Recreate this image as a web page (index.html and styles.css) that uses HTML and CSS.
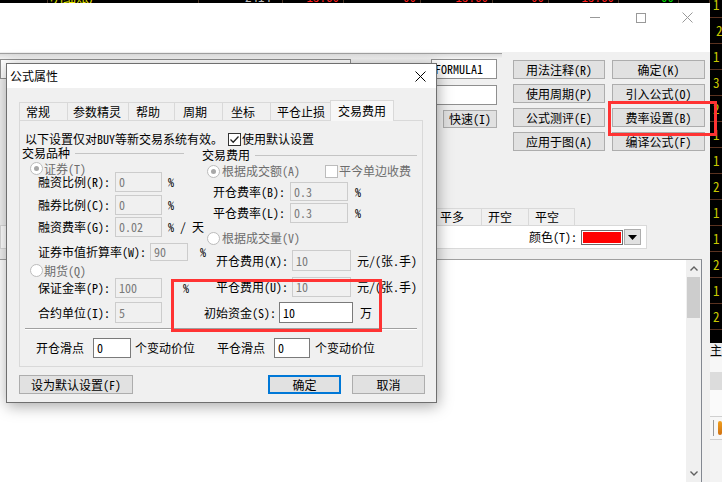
FILE: index.html
```html
<!DOCTYPE html>
<html lang="zh-CN">
<head>
<meta charset="utf-8">
<title>公式属性</title>
<link rel="stylesheet" href="styles.css">
</head>
<body>
<div class="screen">
  <div class="ticker">
    <div class="tk"></div>
    <div class="tk tl"><span class="yl">明细账户</span></div>
    <div class="tk pr11"><span class="gy">2414</span></div>
    <div class="tk"><span class="rd">15.60</span></div>
    <div class="tk"><span class="rd">00</span></div>
    <div class="tk"><span class="rd">15.60</span></div>
    <div class="tk"><span class="rd">00</span></div>
    <div class="tk"><span class="rd">15.60</span></div>
    <div class="tk"><span class="gn">00</span></div>
    <div class="tk"></div>
  </div>

  <div class="rstrip">
    <div class="rs-top">
      <div class="rc first">1</div>
      <div class="rc ind">2</div>
      <div class="rc">1</div>
      <div class="rc">3</div>
      <div class="rc">2</div>
      <div class="rc">1</div>
      <div class="rc">1</div>
      <div class="rc">2</div>
      <div class="rc">1</div>
      <div class="rc">1</div>
      <div class="rc">2</div>
      <div class="rc">1</div>
      <div class="rc">2</div>
    </div>
    <div class="rs-bot">
      <div class="rsb-name">主力资金</div>
      <div class="rsb-gap"></div>
      <div class="rsb-band"></div>
      <div class="rsb-w"></div>
      <div class="rsb-row"><span class="rsb-vl"></span><span class="rsb-ic"></span></div>
      <div class="rsb-rest"></div>
    </div>
  </div>

  <div class="win">
    <div class="wtitle">
      <div class="cap"><span class="cap-min"></span></div>
      <div class="cap"><span class="cap-max"></span></div>
      <div class="cap"><svg width="11" height="11" viewBox="0 0 11 11"><path d="M0.5 0.5L10.5 10.5M10.5 0.5L0.5 10.5" stroke="#999" stroke-width="1" fill="none"/></svg></div>
    </div>
    <div class="wbody">
      <div class="upper">
        <div class="lform">
          <div class="bar"></div>
          <div class="r1"><div class="tb name"></div><div class="tb formula">FORMULA1</div></div>
          <div class="r2"><div class="tb f2"></div></div>
          <div class="r3"><div class="btn quick">快速(I)</div></div>
        </div>
        <div class="btns">
          <div class="btn">用法注释(R)</div><div class="btn">确定(K)</div>
          <div class="btn">使用周期(P)</div><div class="btn">引入公式(O)</div>
          <div class="btn">公式测评(E)</div><div class="btn">费率设置(B)</div>
          <div class="btn">应用于图(A)</div><div class="btn">编译公式(F)</div>
        </div>
      </div>
      <div class="tabs2">
        <div class="t2 w48">开多</div>
        <div class="t2 w49">平多</div>
        <div class="t2 w48">开空</div>
        <div class="t2 w47">平空</div>
      </div>
      <div class="cpanel">
        <span class="clabel">颜色(T):</span>
        <span class="cbox"><span class="cfill"></span></span>
        <span class="cdrop"><svg width="9" height="5" viewBox="0 0 9 5"><path d="M0 0H9L4.5 5Z" fill="#000"/></svg></span>
      </div>
      <div class="editor">
        <div class="edit">
          <div class="vscroll">
            <div class="vs-btn"><svg width="8" height="5" viewBox="0 0 8 5"><path d="M0.5 4.5L4 1L7.5 4.5" stroke="#606060" stroke-width="1.4" fill="none"/></svg></div>
            <div class="vs-thumb"></div>
            <div class="vs-fill"></div>
            <div class="vs-btn"><svg width="8" height="5" viewBox="0 0 8 5"><path d="M0.5 0.5L4 4L7.5 0.5" stroke="#606060" stroke-width="1.4" fill="none"/></svg></div>
          </div>
        </div>
      </div>
    </div>
  </div>

  <div class="dlg">
    <div class="dtitle">
      <span>公式属性</span>
      <svg width="11" height="11" viewBox="0 0 11 11"><path d="M0.5 0.5L10.5 10.5M10.5 0.5L0.5 10.5" stroke="#000" stroke-width="1" fill="none"/></svg>
    </div>
    <div class="dbody">
      <div class="tabs">
        <div class="tab">常规</div>
        <div class="tab">参数精灵</div>
        <div class="tab">帮助</div>
        <div class="tab">周期</div>
        <div class="tab">坐标</div>
        <div class="tab">平仓止损</div>
        <div class="tab sel">交易费用</div>
      </div>
      <div class="panel">
        <div class="notice">
          <span class="ntext">以下设置仅对BUY等新交易系统有效。</span>
          <span class="chk"><svg width="11" height="11" viewBox="0 0 11 11"><path d="M1.5 5.5L4.2 8.2L9.5 2.5" stroke="#222" stroke-width="1.3" fill="none"/></svg></span>
          <span class="ctext">使用默认设置</span>
        </div>
        <div class="cols">
          <div class="lcol">
            <div class="ghdr gl"><span>交易品种</span><span class="gline"></span></div>
            <div class="row l-rad1"><span class="radio on"></span><span class="dis rtext">证券(T)</span></div>
            <div class="row l-a"><span class="lbl lw77">融资比例(R):</span><span class="inp iw47">0</span><span class="u ml6">%</span></div>
            <div class="row l-b"><span class="lbl lw77">融券比例(C):</span><span class="inp iw47">0</span><span class="u ml6">%</span></div>
            <div class="row l-c"><span class="lbl lw77">融资费率(G):</span><span class="inp iw47">0.02</span><span class="u ml6">% / 天</span></div>
            <div class="row l-d"><span class="lbl lw112">证券市值折算率(W):</span><span class="inp iw38">90</span><span class="u ml12">%</span></div>
            <div class="row l-rad2"><span class="radio"></span><span class="dis rtext">期货(Q)</span></div>
            <div class="row l-e"><span class="lbl lw77">保证金率(P):</span><span class="inp iw47">100</span><span class="u ml21">%</span></div>
            <div class="row l-f"><span class="lbl lw77">合约单位(I):</span><span class="inp iw47">5</span></div>
          </div>
          <div class="rcol">
            <div class="ghdr gr"><span>交易费用</span><span class="gline"></span></div>
            <div class="row r-rad1"><span class="rgrp"><span class="radio on"></span><span class="dis rtext2">根据成交额(A)</span></span><span class="chk dchk"></span><span class="dis ctext">平今单边收费</span></div>
            <div class="row r-a"><span class="lbl lw77">开仓费率(B):</span><span class="inp iw58">0.3</span><span class="u ml7">%</span></div>
            <div class="row r-b"><span class="lbl lw77">平仓费率(L):</span><span class="inp iw58">0.3</span><span class="u ml7">%</span></div>
            <div class="row r-rad2"><span class="radio"></span><span class="dis rtext2">根据成交量(V)</span></div>
            <div class="row r-c"><span class="lbl lw76">开仓费用(X):</span><span class="inp iw59">10</span><span class="u ml6">元/(张.手)</span></div>
            <div class="row r-d"><span class="lbl lw76">平仓费用(U):</span><span class="inp iw59">10</span><span class="u ml6">元/(张.手)</span></div>
            <div class="row r-e"><span class="lbl lw75">初始资金(S):</span><span class="inp white iw74">10</span><span class="u ml7">万</span></div>
          </div>
        </div>
        <div class="sep"></div>
        <div class="row slide">
          <span class="lbl lw57">开仓滑点</span><span class="inp white iw38">0</span><span class="u ml4">个变动价位</span>
          <span class="lbl lw57 ml22">平仓滑点</span><span class="inp white iw36">0</span><span class="u ml5">个变动价位</span>
        </div>
      </div>
      <div class="dbtns">
        <div class="btn b-def">设为默认设置(F)</div>
        <div class="btn b-ok">确定</div>
        <div class="btn b-cancel">取消</div>
      </div>
    </div>
    <div class="mark mark-d"></div>
  </div>

  <div class="mark mark-b"></div>
</div>
</body>
</html>
```

FILE: styles.css
```css
* { box-sizing: border-box; margin: 0; padding: 0; }
html, body { width: 722px; height: 482px; overflow: hidden; background: #000; }
body {
  font-family: "Noto Sans Mono CJK SC", "Noto Sans CJK SC", "Noto Sans", sans-serif;
  font-size: 12px;
  line-height: 14px;
  color: #000;
}
.screen {
  position: relative;
  width: 722px;
  height: 482px;
  display: grid;
  grid-template-columns: 710px 12px;
  grid-template-rows: 3px 479px;
}

/* top ticker fragment */
.ticker {
  grid-column: 1; grid-row: 1;
  display: grid;
  grid-template-columns: 48px 151px 84px 61px 77px 72px 56px 70px 60px 31px;
  overflow: hidden;
  background: #000;
}
.tk { height: 3px; overflow: hidden; border-right: 1px solid #4a3526; text-align: right; padding-right: 4px; white-space: nowrap; }
.tk.tl { text-align: left; padding-left: 2px; }
.tk.pr11 { padding-right: 11px; }
.tk span { display: block; font-size: 13px; line-height: 13px; margin-top: -10px; }
.yl { color: #e8e800; }
.gy { color: #bdbdbd; }
.rd { color: #ff2020; }
.gn { color: #00e000; }

/* right strip */
.rstrip { grid-column: 2; grid-row: 1 / 3; display: flex; flex-direction: column; overflow: hidden; background: #000; }
.rs-top { height: 343px; flex: none; display: flex; flex-direction: column; }
.rc { height: 26px; flex: none; border-bottom: 1px solid #5a3220; color: #c8c800; font-size: 13px; line-height: 25px; padding-left: 3px; white-space: nowrap; }
.rc.first { height: 18px; line-height: 10px; }
.rc.ind { padding-left: 6px; }
.rs-bot { flex: 1; background: #f3f3f3; display: flex; flex-direction: column; }
.rsb-name { height: 14px; line-height: 14px; white-space: nowrap; overflow: hidden; background: #ececec; border-bottom: 1px solid #c8c8c8; }
.rsb-gap { height: 15px; background: #f7f7f7; }
.rsb-band { height: 18px; background: #dcdcdc; }
.rsb-w { height: 27px; background: #fafafa; border-bottom: 1px solid #d0d0d0; }
.rsb-row { height: 23px; border-bottom: 1px solid #d0d0d0; display: flex; align-items: center; padding-left: 3px; background: #f7f7f7; }
.rsb-vl { width: 1px; height: 16px; background: #999; }
.rsb-ic { width: 6px; height: 14px; margin-left: 4px; background: linear-gradient(#f0a020, #d07010); border-radius: 2px; }
.rsb-rest { flex: 1; background: #f3f3f3; }

/* background window */
.win { grid-column: 1; grid-row: 2; display: flex; flex-direction: column; background: #f0f0f0; }
.wtitle { height: 49px; flex: none; background: #fff; display: flex; justify-content: flex-end; align-items: flex-start; }
.cap { width: 46px; height: 29px; display: flex; align-items: center; justify-content: center; }
.cap-min { width: 10px; height: 1px; background: #999; }
.cap-max { width: 10px; height: 10px; border: 1px solid #999; }
.wbody { flex: 1; display: flex; flex-direction: column; }
.upper { height: 156px; flex: none; display: flex; }
.lform { width: 513px; flex: none; display: flex; flex-direction: column; }
.bar { margin-top: 1px; width: 502px; height: 6px; border-top: 1px solid #a0a0a0; background: linear-gradient(#dcdcdc, #f4f4f4); }
.r1 { height: 20px; display: flex; }
.tb { height: 20px; background: #fff; border: 1px solid #8f8f8f; padding-left: 3px; line-height: 18px; white-space: nowrap; }
.tb.name { width: 351px; }
.tb.formula { margin-left: 80px; width: 66px; }
.r2 { margin-top: 6px; height: 20px; display: flex; padding-left: 431px; }
.tb.f2 { width: 66px; }
.r3 { margin-top: 5px; display: flex; padding-left: 443px; }
.btn { height: 19px; background: #e1e1e1; border: 1px solid #adadad; display: flex; align-items: center; justify-content: center; white-space: nowrap; }
.btn.quick { width: 54px; height: 18px; }
.btns { padding-top: 8px; display: grid; grid-template-columns: 92px 93px; column-gap: 7px; row-gap: 5px; grid-auto-rows: 19px; align-content: start; }

.tabs2 { height: 17px; flex: none; display: flex; padding-left: 386px; }
.t2 { height: 17px; border: 1px solid #d9d9d9; border-bottom: none; margin-right: -1px; display: flex; align-items: center; padding-left: 6px; background: #f0f0f0; }
.w47 { width: 47px; } .w48 { width: 48px; } .w49 { width: 49px; }

.cpanel { width: 647px; height: 24px; flex: none; background: #fff; border: 1px solid #d9d9d9; display: flex; align-items: center; justify-content: flex-end; padding-right: 5px; }
.clabel { margin-right: 4px; }
.cbox { width: 42px; height: 15px; border: 1px solid #6d6d6d; padding: 1px; background: #fff; display: flex; }
.cfill { flex: 1; background: #ff0000; }
.cdrop { width: 17px; height: 16px; margin-left: 1px; background: #e1e1e1; border: 1px solid #adadad; display: flex; align-items: center; justify-content: center; }

.editor { margin-top: 10px; flex: 1; display: flex; }
.edit { width: 702px; background: #fff; border-top: 1px solid #a0a0a0; border-right: 1px solid #828790; display: flex; justify-content: flex-end; }
.vscroll { width: 15px; background: #f0f0f0; display: flex; flex-direction: column; }
.vs-btn { height: 17px; display: flex; align-items: center; justify-content: center; }
.vs-thumb { height: 41px; margin: 0 1px; background: #cdcdcd; }
.vs-fill { flex: 1; }

/* dialog */
.dlg {
  position: absolute; left: 6px; top: 63px; width: 431px; height: 340px;
  border: 1px solid #6f6f6f; background: #f0f0f0;
  box-shadow: 1px 3px 14px rgba(0,0,0,0.35);
  display: flex; flex-direction: column;
}
.dtitle { height: 24px; flex: none; background: #fff; display: flex; align-items: center; justify-content: space-between; padding: 0 10px 0 3px; }
.dbody { flex: 1; padding: 12px 0 0 12px; }
.tabs { display: flex; align-items: flex-end; height: 20px; }
.tab { height: 18px; border: 1px solid #d9d9d9; border-bottom: none; margin-right: -1px; display: flex; align-items: center; padding-left: 6px; background: #f0f0f0; white-space: nowrap; }
.tab:nth-child(1) { width: 49px; }
.tab:nth-child(2) { width: 62px; padding-left: 5px; }
.tab:nth-child(3) { width: 47px; padding-left: 7px; }
.tab:nth-child(4) { width: 49px; padding-left: 8px; }
.tab:nth-child(5) { width: 49px; padding-left: 8px; }
.tab:nth-child(6) { width: 61px; }
.tab.sel { width: 64px; height: 21px; margin-bottom: -1px; position: relative; z-index: 1; background: #f7f7f7; padding-left: 7px; }

.panel { width: 404px; height: 247px; border: 1px solid #d9d9d9; background: #f0f0f0; display: flex; flex-direction: column; }
.notice { margin-top: 11px; height: 14px; padding-left: 5px; display: flex; align-items: center; white-space: nowrap; }
.ntext { width: 203px; flex: none; }
.chk { width: 13px; height: 13px; flex: none; border: 1px solid #333; background: #fff; display: flex; align-items: center; justify-content: center; }
.chk.dchk { border-color: #bcbcbc; }
.ctext { margin-left: 1px; }

.cols { display: flex; }
.lcol { width: 180px; flex: none; display: flex; flex-direction: column; }
.rcol { width: 222px; flex: none; display: flex; flex-direction: column; }
.row { display: flex; align-items: center; white-space: nowrap; flex: none; }
.ghdr { display: flex; align-items: center; height: 14px; flex: none; }
.gline { flex: 1; height: 1px; background: #c4c4c4; margin-left: 5px; }
.gl { padding-left: 2px; line-height: 12px; }
.gl .gline { margin-right: 16px; }
.gr { margin-top: 2px; padding-left: 2px; }
.gr .gline { margin-right: 5px; }

.radio { width: 13px; height: 13px; flex: none; border-radius: 50%; border: 1px solid #bcbcbc; background: #fff; display: flex; align-items: center; justify-content: center; }
.radio.on::after { content: ""; width: 5px; height: 5px; border-radius: 50%; background: #a8a8a8; }
.dis { color: #6d6d6d; }
.rtext { margin-left: 1px; line-height: 11px; }
.rtext2 { margin-left: 2px; }
.rgrp { display: flex; align-items: center; width: 118px; flex: none; }

.lbl { flex: none; }
.lw57 { width: 57px; } .lw75 { width: 75px; } .lw76 { width: 76px; } .lw77 { width: 77px; } .lw112 { width: 112px; }
.inp { height: 100%; flex: none; border: 1px solid #cccccc; background: #f0f0f0; color: #7a7a7a; padding-left: 3px; display: flex; align-items: center; }
.inp.white { background: #fff; border-color: #7a7a7a; color: #000; }
.iw36 { width: 36px; } .iw38 { width: 38px; } .iw47 { width: 47px; } .iw58 { width: 58px; } .iw59 { width: 59px; } .iw74 { width: 74px; }
.ml4 { margin-left: 4px; } .ml5 { margin-left: 5px; } .ml6 { margin-left: 6px; } .ml7 { margin-left: 7px; }
.ml12 { margin-left: 12px; } .ml21 { margin-left: 21px; } .ml22 { margin-left: 22px; }

.l-rad1 { margin-top: 2px; height: 13px; padding-left: 10px; }
.l-a { margin-top: -3px; height: 20px; padding-left: 18px; line-height: 12px; }
.l-b { margin-top: 3px; height: 20px; padding-left: 18px; }
.l-c { margin-top: 2px; height: 20px; padding-left: 18px; }
.l-d { margin-top: 6px; height: 18px; padding-left: 18px; }
.l-rad2 { margin-top: 3px; height: 13px; padding-left: 10px; }
.l-e { margin-top: 1px; height: 20px; padding-left: 18px; }
.l-f { margin-top: 4px; height: 21px; padding-left: 18px; }

.r-rad1 { margin-top: 2px; height: 14px; padding-left: 7px; }
.r-a { margin-top: 4px; height: 19px; padding-left: 13px; }
.r-b { margin-top: 2px; height: 20px; padding-left: 13px; }
.r-rad2 { margin-top: 8px; height: 14px; padding-left: 7px; }
.r-c { margin-top: 5px; height: 21px; padding-left: 16px; }
.r-d { margin-top: 6px; height: 20px; padding-left: 16px; }
.r-e { margin-top: 5px; height: 21px; padding-left: 4px; }

.sep { margin: 5px 5px 0 5px; height: 2px; border-top: 1px solid #a0a0a0; border-bottom: 1px solid #fff; flex: none; }
.slide { margin-top: 8px; height: 20px; padding-left: 16px; }

.dbtns { margin-top: 8px; height: 19px; display: flex; }
.b-def { width: 114px; }
.b-ok { width: 73px; margin-left: 135px; border: 2px solid #0078d7; }
.b-cancel { width: 73px; margin-left: 11px; }

/* annotation overlays */
.mark { position: absolute; border: 3px solid #f33; pointer-events: none; z-index: 5; }
.mark-d { left: 164px; top: 215px; width: 211px; height: 53px; }
.mark-b { left: 608px; top: 101px; width: 109px; height: 35px; }
```
